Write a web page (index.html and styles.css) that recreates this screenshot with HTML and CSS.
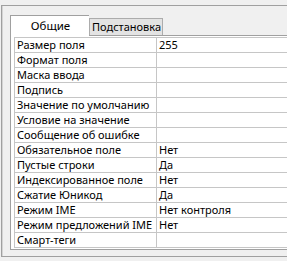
FILE: index.html
```html
<!DOCTYPE html>
<html lang="ru">
<head>
  <meta charset="utf-8" />
  <title>Свойства поля</title>
  <link rel="stylesheet" href="styles.css">
</head>
<body>
  <div class="frame">
    <div class="tabs">
      <div class="tab active">Общие</div>
      <div class="tab">Подстановка</div>
    </div>
    <div class="panel">
      <table class="props">
        <tr><td>Размер поля</td><td>255</td></tr>
        <tr><td>Формат поля</td><td></td></tr>
        <tr><td>Маска ввода</td><td></td></tr>
        <tr><td>Подпись</td><td></td></tr>
        <tr><td>Значение по умолчанию</td><td></td></tr>
        <tr><td>Условие на значение</td><td></td></tr>
        <tr><td>Сообщение об ошибке</td><td></td></tr>
        <tr><td>Обязательное поле</td><td>Нет</td></tr>
        <tr><td>Пустые строки</td><td>Да</td></tr>
        <tr><td>Индексированное поле</td><td>Нет</td></tr>
        <tr><td>Сжатие Юникод</td><td>Да</td></tr>
        <tr><td>Режим IME</td><td>Нет контроля</td></tr>
        <tr><td>Режим предложений IME</td><td>Нет</td></tr>
        <tr><td>Смарт-теги</td><td></td></tr>
      </table>
    </div>
  </div>
</body>
</html>
```

FILE: styles.css
```css
body {
  background: #f0f0f0;
  font-family: 'Noto Sans', 'Open Sans', sans-serif;
  font-size: 11px;
  color: #000;
  margin: 0;
  padding: 0;
  overflow: hidden;
}
.frame {
  margin: 5px 0 0 1px;
  height: 252px;
  border-top: 1px solid #a0a0a0;
  border-left: 1px solid #a0a0a0;
  border-bottom: 1px solid #a0a0a0;
  box-shadow: inset 1px 0 0 #d4d4d4;
  padding: 9px 0 0 8px;
  box-sizing: border-box;
}
.tabs {
  display: flex;
  align-items: flex-end;
  height: 20px;
  position: relative;
  z-index: 1;
}
.tab {
  height: 17px;
  line-height: 16px;
  padding: 0 1px 0 2px;
  background: #e3e3e3;
  border: 1px solid #acacac;
  border-bottom: none;
  box-sizing: border-box;
  white-space: nowrap;
}
.tab.active {
  height: 21px;
  width: 79px;
  margin-bottom: -1px;
  line-height: 20px;
  text-align: center;
  font-size: 11.5px;
  background: #fff;
  border-color: #a0a0a0;
  border-right: none;
}
.panel {
  height: 215px;
  background: #fff;
  border: 1px solid #a0a0a0;
  border-right: none;
  box-sizing: border-box;
  padding: 1px 0 0 3px;
}
.props {
  border-collapse: collapse;
  table-layout: fixed;
  width: 100%;
}
.props td {
  border: 1px solid #c6c6c6;
  border-right: none;
  height: 14px;
  padding: 0 0 0 2px;
  line-height: 14px;
  white-space: nowrap;
  overflow: hidden;
  vertical-align: middle;
}
.props td:first-child {
  width: 139px;
  border-right: 1px solid #c6c6c6;
}
```
